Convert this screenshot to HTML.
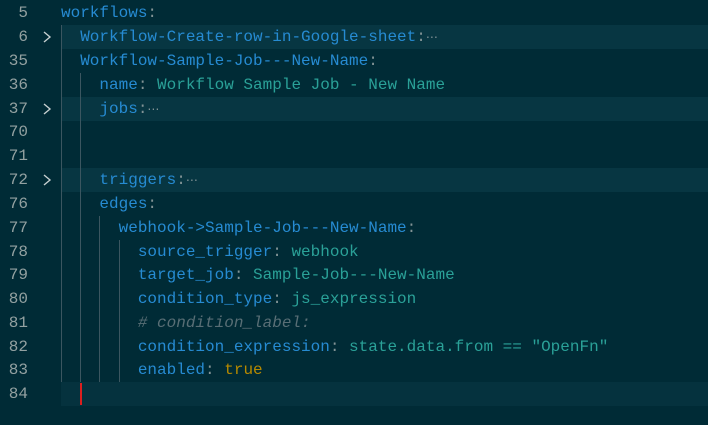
<!DOCTYPE html>
<html><head><style>
body{margin:0;width:708px;height:425px;background:#002b36;overflow:hidden;font-family:"Liberation Mono",monospace;font-size:16px}
.r{position:absolute;left:0;width:708px;height:24px;line-height:24px;white-space:pre}
.hl{background:#073642;left:61px;width:647px}
.n{position:absolute;left:0;width:28px;text-align:right;color:#93a1a1}
.c{position:absolute;left:42px;top:6px;width:10px;height:12px}
.t{position:absolute;left:61px}
.k{color:#268bd2}.s{color:#2aa198}.p{color:#839496}.b{color:#b58900}.cm{color:#586e75;font-style:italic}
.e{color:#839496;font-family:"DejaVu Sans",sans-serif;font-size:12px}
.g{position:absolute;width:1px;background:#3b5660}
</style></head><body>
<div class="r hl" style="top:25px"></div>
<div class="r hl" style="top:97px"></div>
<div class="r hl" style="top:168px"></div>
<div class="r hl" style="top:382px;background:#05323e"></div>
<div class="g" style="left:61px;top:25px;height:357px"></div>
<div class="g" style="left:80px;top:73px;height:309px"></div>
<div class="g" style="left:99px;top:216px;height:166px"></div>
<div class="g" style="left:119px;top:240px;height:142px"></div>
<div style="position:absolute;left:80px;top:383px;width:2px;height:22px;background:#dc1f1f"></div>

<div class="r" style="top:1px"><span class="n">5</span><span class="t"><span class="k">workflows</span><span class="p">:</span></span></div>
<div class="r" style="top:25px"><span class="n">6</span><svg class="c" viewBox="0 0 10 12"><polyline points="2,1 8,6 2,11" fill="none" stroke="#c5cfd0" stroke-width="1.4"/></svg><span class="t">  <span class="k">Workflow-Create-row-in-Google-sheet</span><span class="p">:</span><span class="e">⋯</span></span></div>
<div class="r" style="top:49px"><span class="n">35</span><span class="t">  <span class="k">Workflow-Sample-Job---New-Name</span><span class="p">:</span></span></div>
<div class="r" style="top:73px"><span class="n">36</span><span class="t">    <span class="k">name</span><span class="p">: </span><span class="s">Workflow Sample Job - New Name</span></span></div>
<div class="r" style="top:97px"><span class="n">37</span><svg class="c" viewBox="0 0 10 12"><polyline points="2,1 8,6 2,11" fill="none" stroke="#c5cfd0" stroke-width="1.4"/></svg><span class="t">    <span class="k">jobs</span><span class="p">:</span><span class="e">⋯</span></span></div>
<div class="r" style="top:120px"><span class="n">70</span></div>
<div class="r" style="top:144px"><span class="n">71</span></div>
<div class="r" style="top:168px"><span class="n">72</span><svg class="c" viewBox="0 0 10 12"><polyline points="2,1 8,6 2,11" fill="none" stroke="#c5cfd0" stroke-width="1.4"/></svg><span class="t">    <span class="k">triggers</span><span class="p">:</span><span class="e">⋯</span></span></div>
<div class="r" style="top:192px"><span class="n">76</span><span class="t">    <span class="k">edges</span><span class="p">:</span></span></div>
<div class="r" style="top:216px"><span class="n">77</span><span class="t">      <span class="k">webhook-&gt;Sample-Job---New-Name</span><span class="p">:</span></span></div>
<div class="r" style="top:240px"><span class="n">78</span><span class="t">        <span class="k">source_trigger</span><span class="p">: </span><span class="s">webhook</span></span></div>
<div class="r" style="top:263px"><span class="n">79</span><span class="t">        <span class="k">target_job</span><span class="p">: </span><span class="s">Sample-Job---New-Name</span></span></div>
<div class="r" style="top:287px"><span class="n">80</span><span class="t">        <span class="k">condition_type</span><span class="p">: </span><span class="s">js_expression</span></span></div>
<div class="r" style="top:311px"><span class="n">81</span><span class="t">        <span class="cm"># condition_label:</span></span></div>
<div class="r" style="top:335px"><span class="n">82</span><span class="t">        <span class="k">condition_expression</span><span class="p">: </span><span class="s">state.data.from == "OpenFn"</span></span></div>
<div class="r" style="top:358px"><span class="n">83</span><span class="t">        <span class="k">enabled</span><span class="p">: </span><span class="b">true</span></span></div>
<div class="r" style="top:382px"><span class="n">84</span></div>
</body></html>
